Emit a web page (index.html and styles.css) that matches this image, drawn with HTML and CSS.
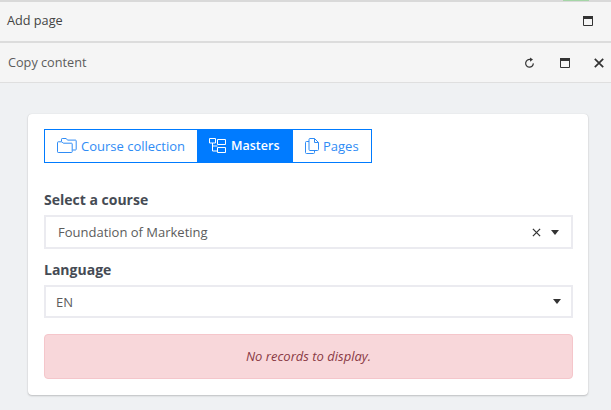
FILE: index.html
```html
<!DOCTYPE html>
<html lang="en">
<head>
<meta charset="utf-8">
<title>Copy content</title>
<link rel="stylesheet" href="styles.css">
</head>
<body>
<div class="topline"><span class="topline-accent"></span></div>
<header class="bar bar-first">
  <span class="bar-title">Add page</span>
  <div class="bar-actions">
    <svg class="ico" viewBox="0 0 10 10"><path class="win" d="M.5.5h9v9h-9z"/><path class="solid" d="M0 0h10v3H0z"/></svg>
  </div>
</header>
<header class="bar bar-second">
  <span class="bar-title second">Copy content</span>
  <div class="bar-actions wide">
    <svg class="ico refresh" viewBox="0 0 12 12"><path class="line" d="M7.2 2.3A4.2 4.2 0 1 0 10.2 6.4"/><path class="solid" d="M6.6 0l3.2 2.3-3.2 2.2z"/></svg>
    <svg class="ico" viewBox="0 0 10 10"><path class="win" d="M.5.5h9v9h-9z"/><path class="solid" d="M0 0h10v3H0z"/></svg>
    <svg class="ico close" viewBox="0 0 10 10"><path class="x" d="M.8.8l8.4 8.4M9.2.8L.8 9.2"/></svg>
  </div>
</header>
<main class="content">
  <section class="card">
    <nav class="tabs">
      <a class="tab tab-course">
        <svg class="tab-ico folder" viewBox="0 0 20 15"><path d="M4.5 3V1.2a.7.7 0 0 1 .7-.7h4l1.3 1.6h8a.7.7 0 0 1 .7.7v8.5a.7.7 0 0 1-.7.7H15.500"/><path d="M1.200 3.800h3.800l1.300 1.400h8.200a.7.7 0 0 1 .7.7v7.900a.7.7 0 0 1-.7.7H1.200a.7.7 0 0 1-.7-.7V4.500a.7.7 0 0 1 .7-.7z"/></svg>
        Course collection
      </a>
      <a class="tab tab-active">
        <svg class="tab-ico tree" viewBox="0 0 17 15"><path d="M.5.500h6v4.500h-6zM3.500 5v8h5M3.500 8h5M8.500 1.500h8v5h-8zM8.500 9.500h8v5h-8z"/></svg>
        Masters
      </a>
      <a class="tab tab-pages">
        <svg class="tab-ico pages" viewBox="0 0 14 16"><path d="M4 3.500H1.500a1 1 0 0 0-1 1v10a1 1 0 0 0 1 1h7a1 1 0 0 0 1-1V12.500"/><path d="M4 1.500a1 1 0 0 1 1-1h4.500l4 4v7a1 1 0 0 1-1 1H5a1 1 0 0 1-1-1zM9.500.500v4h4"/></svg>
        Pages
      </a>
    </nav>

    <label class="field-label label-course">Select a course</label>
    <div class="select select-course">
      <span class="select-value">Foundation of Marketing</span>
      <svg class="clear" viewBox="0 0 10 10"><path class="x" d="M1 1l8 8M9 1l-8 8"/></svg>
      <span class="caret"></span>
    </div>

    <label class="field-label label-lang">Language</label>
    <div class="select select-lang">
      <span class="select-value">EN</span>
      <span class="caret"></span>
    </div>

    <div class="alert">No records to display.</div>
  </section>
</main>
</body>
</html>
```

FILE: styles.css
```css
* { box-sizing: border-box; }
html, body { margin: 0; padding: 0; }
body {
  width: 611px;
  height: 410px;
  overflow: hidden;
  background: #eff1f3;
  font-family: "Open Sans", "Liberation Sans", sans-serif;
  font-size: 13px;
  color: #444;
}
.topline {
  height: 2px;
  background: #d9d9d9;
  padding-left: 563px;
}
.topline-accent {
  display: block;
  width: 26px;
  height: 1px;
  background: #a5d6a7;
}
.bar {
  display: flex;
  align-items: center;
  justify-content: space-between;
  background: #f5f5f5;
}
.bar-first {
  height: 41px;
  border-bottom: 2px solid #dcdcdc;
  padding: 0 18px 1px 7px;
}
.bar-second {
  height: 40px;
  border-bottom: 1px solid #dfdfdf;
  padding: 0 7px 0 8px;
}
.bar-title { font-size: 12.700px; color: #444; margin-bottom: 2px; }
.bar-title.second { color: #5c5c5c; }
.bar-actions { display: flex; align-items: center; }
.bar-actions.wide { gap: 24px; }
.ico { width: 10px; height: 10px; display: block; }
.ico.refresh { width: 11px; height: 12px; margin-right: 1px; }
.ico.close { width: 10px; height: 10px; }
.win { fill: none; stroke: #333; stroke-width: 1; }
.solid { fill: #333; }
.line { fill: none; stroke: #333; stroke-width: 1.300; }
.x { fill: none; stroke: #333; stroke-width: 1.700; }

.content { padding: 31px 23px 0 28px; }
.card {
  height: 281px;
  background: #fff;
  border-radius: 4px;
  box-shadow: 0 1px 2px rgba(0, 0, 0, .2), 0 0 1px rgba(0, 0, 0, .15);
  padding: 15px 15px 16px 16px;
}
.tabs {
  display: inline-flex;
  height: 34px;
  border: 1px solid #007bff;
  vertical-align: top;
}
.tab {
  display: flex;
  align-items: center;
  color: #2f8cf5;
  font-size: 13px;
  line-height: 30px;
  padding-bottom: 1px;
}
.tab-course { width: 152px; padding-left: 12px; gap: 4px; }
.tab-active {
  width: 96px;
  padding-left: 12px;
  gap: 5px;
  background: #007bff;
  color: #fff;
  font-weight: 600;
  font-size: 12.500px;
}
.tab-pages { width: 78px; padding-left: 12px; gap: 4px; }
.tab-ico { display: block; fill: none; stroke: currentColor; stroke-width: 1; }
.tab-ico.folder { width: 20px; height: 15px; }
.tab-ico.tree { width: 17px; height: 15px; }
.tab-ico.pages { width: 14px; height: 16px; }

.field-label {
  display: block;
  font-weight: 700;
  font-size: 14px;
  line-height: 18px;
  color: #454b54;
}
.label-course { margin-top: 28px; margin-bottom: 6px; }
.label-lang { margin-top: 12px; margin-bottom: 6px; }
.select {
  display: flex;
  align-items: center;
  border: 2px solid #ebebf0;
  background: #fff;
  color: #5c5c5c;
  font-size: 13px;
}
.select-course { height: 34px; padding: 0 12px 0 12px; }
.select-lang { height: 33px; padding: 0 10px 0 10px; }
.select-value { flex: 1; }
.clear { width: 9px; height: 9px; margin-right: 10px; display: block; }
.clear .x { stroke-width: 1.400; }
.caret {
  width: 0;
  height: 0;
  border-left: 4px solid transparent;
  border-right: 4px solid transparent;
  border-top: 5px solid #333;
}
.alert {
  margin-top: 16px;
  height: 45px;
  padding-bottom: 2px;
  display: flex;
  align-items: center;
  justify-content: center;
  background: #f8d7da;
  border: 1px solid #f5c6cb;
  border-radius: 4px;
  color: #8a3a45;
  font-size: 13px;
  font-style: italic;
}
```
